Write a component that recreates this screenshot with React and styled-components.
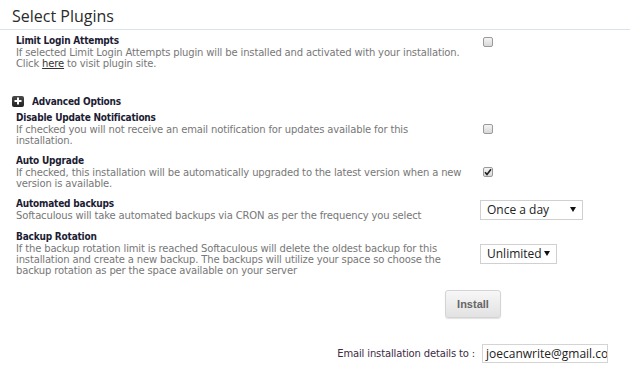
import React from 'react';
import styled, { createGlobalStyle } from 'styled-components';

const GlobalStyle = createGlobalStyle`
  html, body {
    margin: 0;
    padding: 0;
    background: #fff;
  }
  body {
    font-family: "DejaVu Sans", Verdana, sans-serif;
  }
`;

const Page = styled.div`
  width: 630px;
  height: 383px;
  overflow: hidden;
  background: #fff;
`;

const Title = styled.h2`
  margin: 0;
  padding: 6px 0 0 12px;
  height: 23px;
  font-family: "Open Sans", sans-serif;
  font-weight: 400;
  font-size: 16px;
  line-height: 20px;
  color: #2b2b2b;
  border-bottom: 1px solid #d9e3ec;
`;

const Section = styled.div`
  display: flex;
  flex-direction: column;
  padding-top: ${(p) => p.$top || 0}px;
`;

const Row = styled.div`
  display: grid;
  grid-template-columns: 464px 1fr;
  align-items: ${(p) => (p.$top ? 'start' : 'center')};
  padding-left: 16px;
  margin-top: ${(p) => p.$gap || 0}px;
`;

const Label = styled.div`
  font-family: "DejaVu Sans Condensed", "DejaVu Sans", sans-serif;
  font-weight: 700;
  font-size: 10px;
  letter-spacing: -0.2px;
  line-height: 12px;
  color: #1c1c34;
`;

const Desc = styled.div`
  font-size: 10px;
  letter-spacing: -0.15px;
  line-height: 11px;
  color: #777;
  padding-right: 16px;

  a {
    color: #333;
    text-decoration: underline;
  }
`;

const Control = styled.div`
  display: flex;
  align-items: center;
  padding-top: ${(p) => p.$pt || 0}px;
`;

const Check = styled.span`
  display: inline-flex;
  align-items: center;
  justify-content: center;
  box-sizing: border-box;
  width: 10px;
  height: 10px;
  margin-left: 3px;
  border: 1px solid #9a9a9a;
  border-radius: 2px;
  background: linear-gradient(#f4f4f4, #d8d8d8);
`;

const AdvancedRow = styled.div`
  display: flex;
  align-items: center;
  gap: 8px;
  padding-left: 12px;
  height: 12px;
  margin-top: 26px;
`;

const PlusIcon = styled.span`
  display: inline-flex;
  align-items: center;
  justify-content: center;
  width: 12px;
  height: 11px;
  border-radius: 2px;
  background: linear-gradient(#4a4a4a, #222);
`;

const AdvancedText = styled.span`
  font-family: "DejaVu Sans Condensed", "DejaVu Sans", sans-serif;
  font-weight: 700;
  font-size: 10px;
  letter-spacing: -0.2px;
  color: #1c1c34;
`;

const Select = styled.div`
  display: flex;
  align-items: center;
  justify-content: space-between;
  box-sizing: border-box;
  width: ${(p) => p.$w}px;
  height: 20px;
  padding: 0 6px 0 6px;
  border: 1px solid #d0d0d0;
  font-family: "Open Sans", sans-serif;
  font-size: 12px;
  color: #222;
  background: #fff;
`;

const Arrow = styled.span`
  width: 0;
  height: 0;
  border-left: 3px solid transparent;
  border-right: 3px solid transparent;
  border-top: 5px solid #111;
`;

const ButtonWrap = styled.div`
  display: flex;
  justify-content: flex-start;
  padding-left: 445px;
  margin-top: 14px;
`;

const Button = styled.button`
  width: 56px;
  height: 28px;
  border: 1px solid #d4d4d4;
  border-radius: 3px;
  background: linear-gradient(#f7f7f7, #e2e2e2);
  box-shadow: 0 1px 1px rgba(0, 0, 0, 0.12);
  font-family: "Liberation Sans", Arial, sans-serif;
  font-weight: 700;
  font-size: 11px;
  color: #666;
  padding: 0;
`;

const EmailRow = styled.div`
  display: flex;
  align-items: center;
  justify-content: flex-end;
  gap: 7px;
  padding-right: 22px;
  margin-top: 26px;
`;

const EmailLabel = styled.span`
  font-size: 10px;
  letter-spacing: -0.15px;
  color: #3d2b45;
`;

const EmailInput = styled.div`
  box-sizing: border-box;
  width: 126px;
  height: 19px;
  padding: 0 3px;
  border: 1px solid #d4d4d4;
  font-family: "Open Sans", sans-serif;
  font-size: 12px;
  line-height: 17px;
  color: #222;
  white-space: nowrap;
  overflow: hidden;
`;

const Checkbox = ({ checked }) => (
  <Check>
    {checked && (
      <svg width="8" height="8" viewBox="0 0 8 8">
        <path d="M1 4.2 L3 6.4 L7 1.2" fill="none" stroke="#222" strokeWidth="1.6" />
      </svg>
    )}
  </Check>
);

const Dropdown = ({ value, width }) => (
  <Select $w={width}>
    <span>{value}</span>
    <Arrow />
  </Select>
);

const options = [
  {
    label: 'Disable Update Notifications',
    desc: 'If checked you will not receive an email notification for updates available for this installation.',
    control: <Checkbox />,
    gap: 5,
  },
  {
    label: 'Auto Upgrade',
    desc: 'If checked, this installation will be automatically upgraded to the latest version when a new version is available.',
    control: <Checkbox checked />,
    gap: 9,
  },
  {
    label: 'Automated backups',
    desc: 'Softaculous will take automated backups via CRON as per the frequency you select',
    control: <Dropdown value="Once a day" width={103} />,
    gap: 9,
  },
  {
    label: 'Backup Rotation',
    desc: 'If the backup rotation limit is reached Softaculous will delete the oldest backup for this installation and create a new backup. The backups will utilize your space so choose the backup rotation as per the space available on your server',
    control: <Dropdown value="Unlimited" width={77} />,
    gap: 10,
  },
];

export default function App() {
  return (
    <Page>
      <GlobalStyle />
      <Title>Select Plugins</Title>
      <Section $top={5}>
        <Row $top>
          <div>
            <Label>Limit Login Attempts</Label>
            <Desc>
              If selected Limit Login Attempts plugin will be installed and activated with your installation.
              <br />
              Click <a href="#plugin">here</a> to visit plugin site.
            </Desc>
          </div>
          <Control $pt={2}>
            <Checkbox />
          </Control>
        </Row>
      </Section>
      <AdvancedRow>
        <PlusIcon>
          <svg width="8" height="8" viewBox="0 0 8 8">
            <path d="M4 0.5 V7.5 M0.5 4 H7.5" stroke="#fff" strokeWidth="2" />
          </svg>
        </PlusIcon>
        <AdvancedText>Advanced Options</AdvancedText>
      </AdvancedRow>
      <Section>
        {options.map((o) => (
          <Row key={o.label} $gap={o.gap}>
            <div>
              <Label>{o.label}</Label>
              <Desc>{o.desc}</Desc>
            </div>
            <Control>{o.control}</Control>
          </Row>
        ))}
      </Section>
      <ButtonWrap>
        <Button>Install</Button>
      </ButtonWrap>
      <EmailRow>
        <EmailLabel>Email installation details to :</EmailLabel>
        <EmailInput>joecanwrite@gmail.co</EmailInput>
      </EmailRow>
    </Page>
  );
}
